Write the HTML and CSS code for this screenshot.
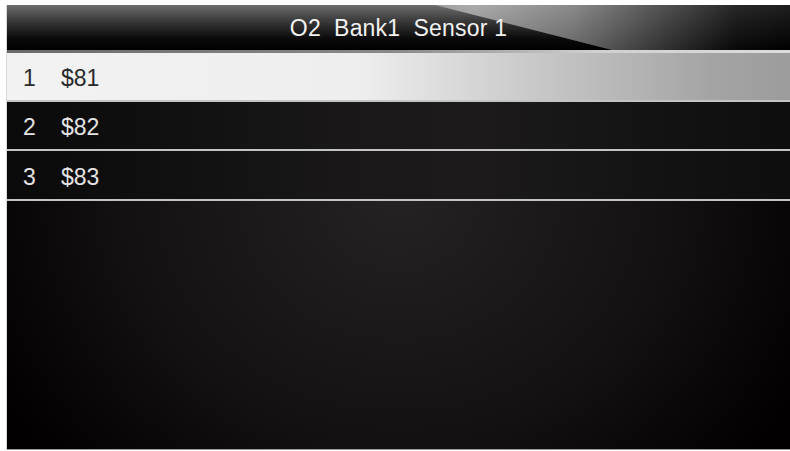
FILE: index.html
```html
<!DOCTYPE html>
<html>
<head>
<meta charset="utf-8">
<link rel="stylesheet" href="styles.css">
</head>
<body>
<div class="screen">
  <div class="title"><span class="title-text">O2&nbsp;&nbsp;Bank1&nbsp;&nbsp;Sensor 1</span></div>
  <div class="sep"></div>
  <div class="row selected"><span class="num">1</span><span class="val">$81</span></div>
  <div class="row"><span class="num">2</span><span class="val">$82</span></div>
  <div class="row last"><span class="num">3</span><span class="val">$83</span></div>
  <div class="body"></div>
</div>
</body>
</html>
```
FILE: styles.css
```css
html, body {
  margin: 0;
  padding: 0;
  background: #ffffff;
}
body {
  width: 790px;
  height: 451px;
  overflow: hidden;
  font-family: "Liberation Sans", Arial, sans-serif;
}
.screen {
  margin: 5px 0 0 7px;
  width: 783px;
  height: 444px;
  display: flex;
  flex-direction: column;
  background: #0c0b0b;
  border-bottom: 1px solid #9a9a9a;
  box-shadow: -1px 0 0 #d8d8d8;
}
.title {
  position: relative;
  height: 45px;
  flex: none;
  display: flex;
  align-items: center;
  justify-content: center;
  background: linear-gradient(to bottom, #6e6e6e 0%, #3a3a3a 35%, #0a0a0a 75%, #000 100%);
  overflow: hidden;
}
.title::before {
  content: "";
  position: absolute;
  top: 0;
  left: 420px;
  right: 0;
  bottom: 0;
  background:
    linear-gradient(to bottom, rgba(255,255,255,0.12), rgba(0,0,0,0.15)),
    linear-gradient(to right, #8e8e8e 0%, #a0a0a0 12%, #7a7a7a 40%, #3a3a3a 65%, #0a0a0a 85%, #000 100%);
  clip-path: polygon(8px 0, 100% 0, 100% 100%, 185px 100%);
}
.title-text {
  position: relative;
  color: #f2f2f2;
  font-size: 23px;
  margin-top: 2px;
  letter-spacing: 0.2px;
}
.sep {
  height: 3px;
  flex: none;
  background: linear-gradient(to right, #6a6a6a 0%, #8a8a8a 50%, #d0d0d0 75%, #dcdcdc 100%);
}
.row {
  height: 49px;
  flex: none;
  display: flex;
  align-items: center;
  padding: 4px 0 0 16px;
  box-sizing: border-box;
  border-bottom: 2px solid #c4c4c4;
  font-size: 23px;
  color: #e4e4e4;
  background: linear-gradient(to right, #0a0a0a 0%, #1a1818 45%, #1c1a1a 60%, #0e0e0e 100%);
}
.row.last {
  height: 50px;
}
.row.selected {
  color: #2a2a2a;
  background: linear-gradient(to right, #f2f2f2 0%, #eeeeee 45%, #c4c4c4 70%, #a4a4a4 90%, #9c9c9c 100%);
}
.num {
  width: 38px;
}
.body {
  flex: 1;
  background:
    radial-gradient(ellipse 58% 160% at 50% 0%, #242222 0%, #1a1818 35%, #131112 60%, #080606 85%, #020000 100%);
}
```
